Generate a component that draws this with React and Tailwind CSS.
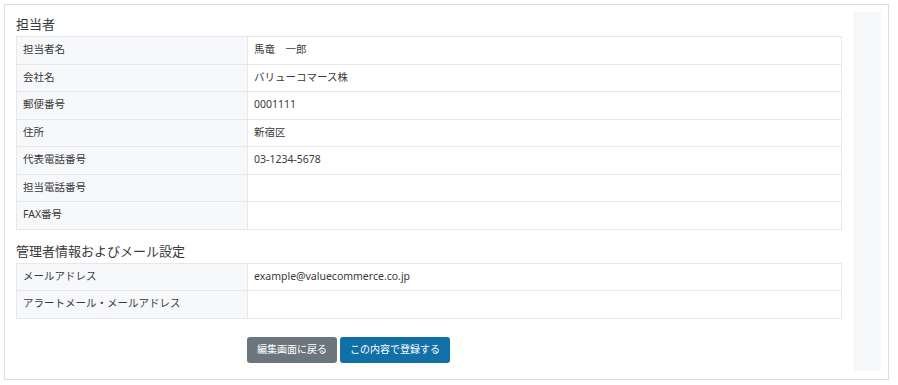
import React from 'react'

const font = { fontFamily: '"Noto Sans", "Noto Sans CJK JP", sans-serif' }

const contactRows = [
  ['担当者名', '馬竜　一郎'],
  ['会社名', 'バリューコマース株'],
  ['郵便番号', '0001111'],
  ['住所', '新宿区'],
  ['代表電話番号', '03-1234-5678'],
  ['担当電話番号', ''],
  ['FAX番号', ''],
]

const mailRows = [
  ['メールアドレス', 'example@valuecommerce.co.jp'],
  ['アラートメール・メールアドレス', ''],
]

function InfoTable({ rows }) {
  return (
    <table className="w-full border-collapse border border-[#e6e8ec] text-[10.5px] text-[#3a3a3a]">
      <tbody>
        {rows.map(([label, value]) => (
          <tr key={label} className="h-[27.5px]">
            <td className="w-[231px] border border-[#e6e8ec] bg-[#f7f8fa] px-[6px] py-0 align-middle">{label}</td>
            <td className="border border-[#e6e8ec] bg-white px-[6px] py-0 align-middle">{value}</td>
          </tr>
        ))}
      </tbody>
    </table>
  )
}

function SectionTitle({ children, className = '' }) {
  return (
    <h2 className={`h-6 text-[13px] leading-6 font-normal text-[#3a3a3a] ${className}`}>{children}</h2>
  )
}

export default function App() {
  return (
    <div className="w-[898px] h-[385px] bg-white p-1" style={font}>
      <div className="flex h-[376px] w-[885px] border border-[#dcdcdc] pl-[11px] pr-[7px] pt-[7px] pb-[8px]">
        <div className="flex-1 flex flex-col">
          <SectionTitle>担当者</SectionTitle>
          <InfoTable rows={contactRows} />
          <SectionTitle className="mt-[9px]">管理者情報およびメール設定</SectionTitle>
          <InfoTable rows={mailRows} />
          <div className="mt-[18px] flex gap-[3px] pl-[231px]">
            <button className="h-[26px] rounded-[3px] bg-[#6c757d] px-[10px] text-[10px] text-white">編集画面に戻る</button>
            <button className="h-[26px] rounded-[3px] bg-[#1170a8] px-[10px] text-[10px] text-white">この内容で登録する</button>
          </div>
        </div>
        <div className="ml-3 w-[27px] border-l border-[#eef0f3] bg-[#f7f8fa]" />
      </div>
    </div>
  )
}
